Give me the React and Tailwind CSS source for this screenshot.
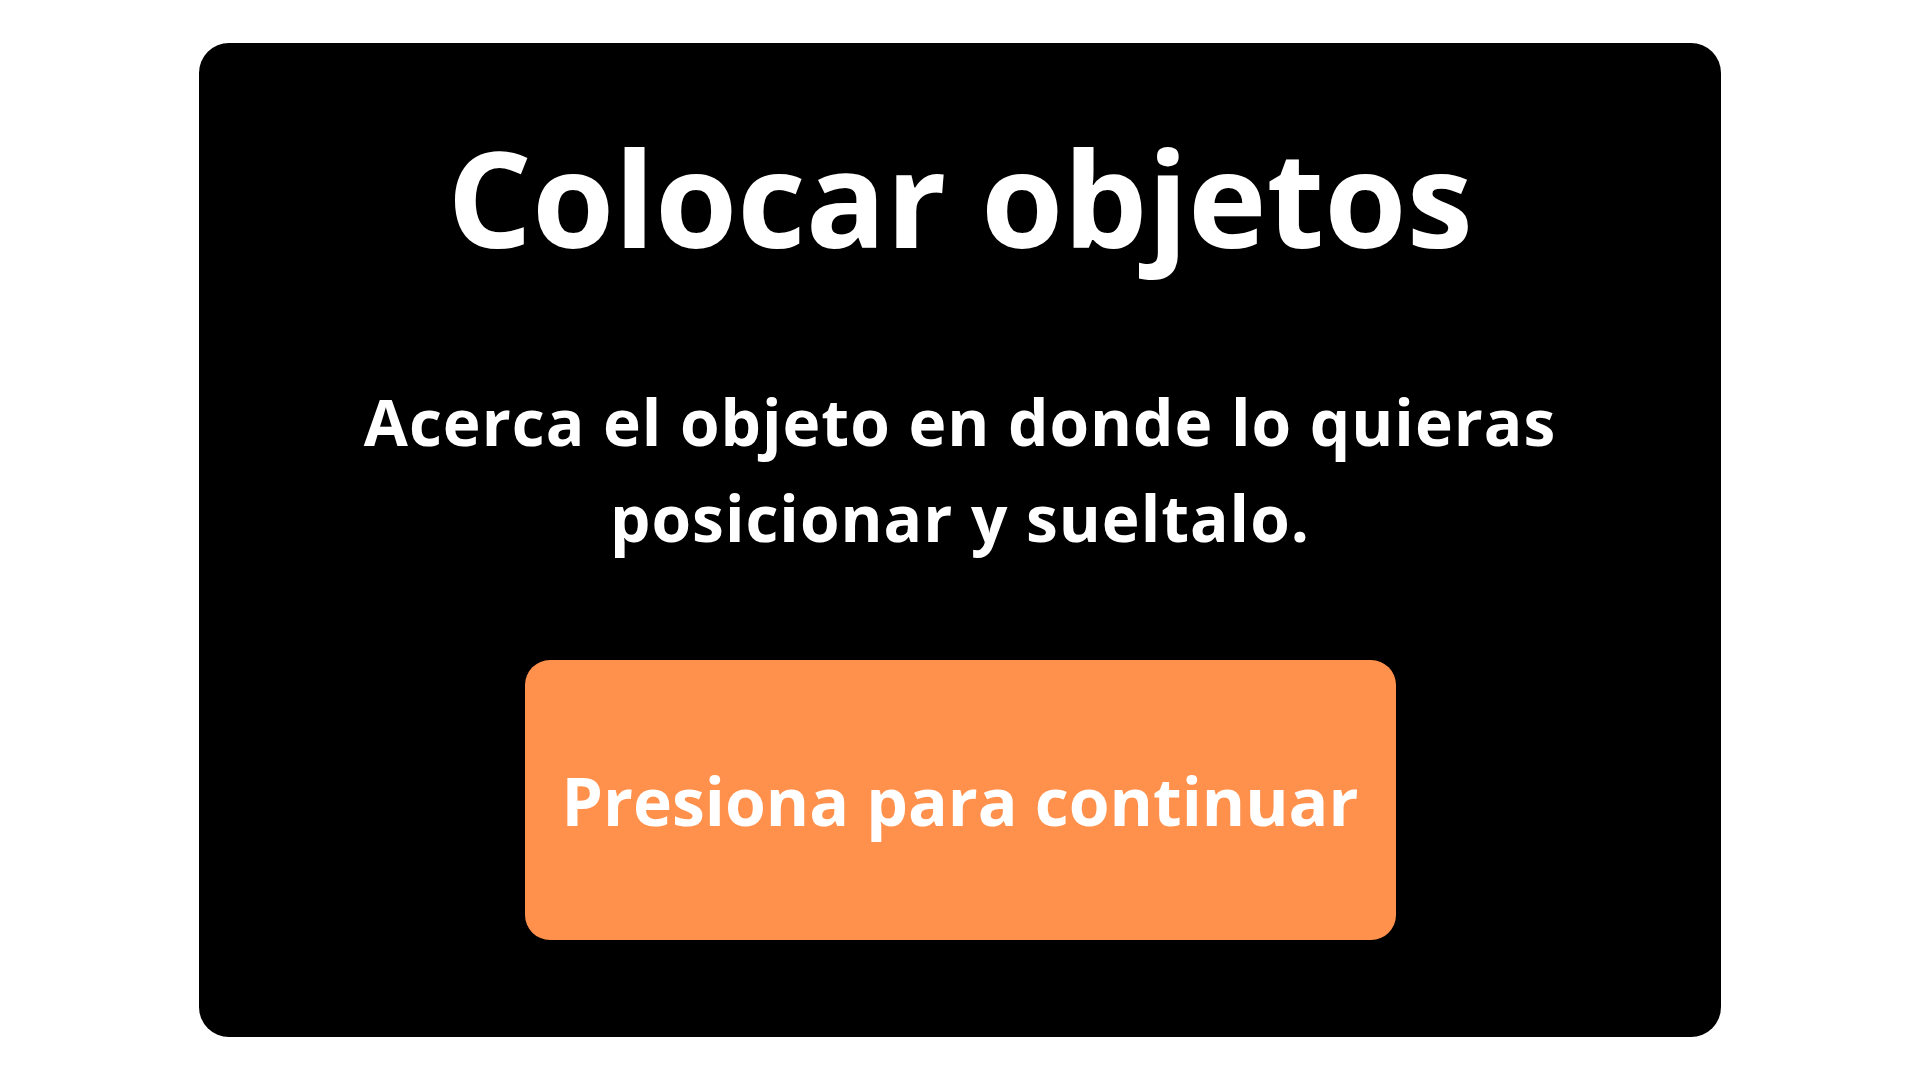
export default function App() {
  return (
    <div className="w-[1920px] h-[1080px] bg-white flex items-center justify-center" style={{ fontFamily: '"Open Sans", sans-serif' }}>
      <div className="w-[1522px] h-[994px] bg-black rounded-[30px] flex flex-col items-center pt-[87px]">
        <h1 className="text-white font-bold text-[133px] leading-none">Colocar objetos</h1>
        <p className="mt-[111px] text-white font-bold text-[64px] leading-[96px] tracking-[1px] text-center w-[1300px]">
          Acerca el objeto en donde lo quieras posicionar y sueltalo.
        </p>
        <button className="mt-[94px] w-[871px] h-[280px] bg-[#ff914d] rounded-[25px] flex items-center justify-center">
          <span className="text-white font-bold text-[66px] leading-none">Presiona para continuar</span>
        </button>
      </div>
    </div>
  );
}
